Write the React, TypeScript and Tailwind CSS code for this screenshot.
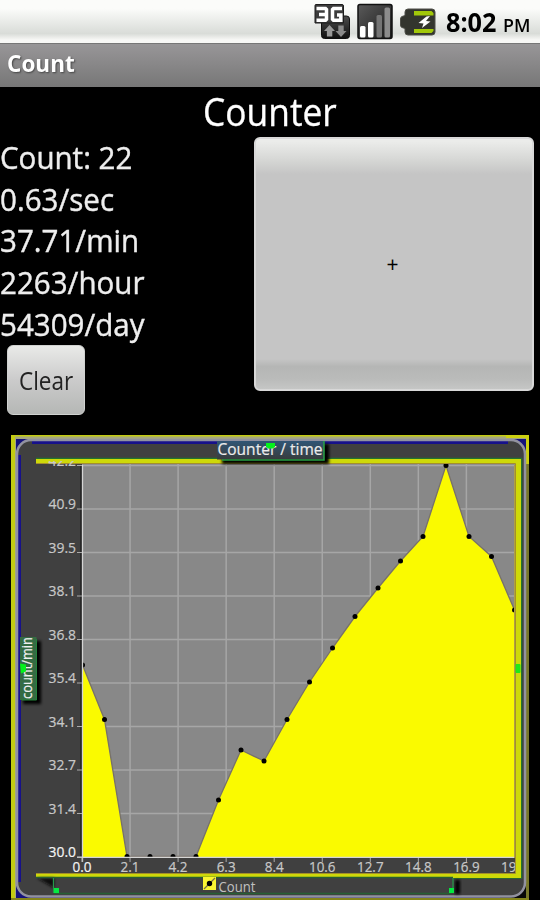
import { ReactNode } from "react";

interface CondensedProps {
  children: ReactNode;
  className?: string;
}

interface Point {
  x: number;
  y: number;
}

const rates = ["Count: 22", "0.63/sec", "37.71/min", "2263/hour", "54309/day"];

const yLabels = ["42.2", "40.9", "39.5", "38.1", "36.8", "35.4", "34.1", "32.7", "31.4", "30.0"];
const xLabels = ["0.0", "2.1", "4.2", "6.3", "8.4", "10.6", "12.7", "14.8", "16.9"];

const points: Point[] = [
  { x: 82.5, y: 665 },
  { x: 104.5, y: 719.5 },
  { x: 127, y: 856.5 },
  { x: 150, y: 856.5 },
  { x: 173, y: 856.5 },
  { x: 196, y: 856.5 },
  { x: 218.5, y: 800 },
  { x: 241, y: 750 },
  { x: 264, y: 761 },
  { x: 287, y: 719.5 },
  { x: 309.5, y: 682 },
  { x: 332.5, y: 648 },
  { x: 355, y: 616.5 },
  { x: 378, y: 588 },
  { x: 400.5, y: 561 },
  { x: 423, y: 536.5 },
  { x: 446, y: 465.5 },
  { x: 469, y: 536.5 },
  { x: 491.5, y: 556.5 },
  { x: 514.5, y: 610 },
];

const line = points.map((point) => `${point.x},${point.y}`).join(" ");

function Condensed({ children, className = "" }: CondensedProps) {
  return <span className={`block whitespace-nowrap ${className}`}>{children}</span>;
}

function NetworkIcon() {
  return (
    <svg width="37" height="37" viewBox="0 0 37 37">
      <defs>
        <linearGradient id="dark" x1="0" y1="0" x2="0" y2="1">
          <stop offset="0" stopColor="#4c4c4c" />
          <stop offset="1" stopColor="#101010" />
        </linearGradient>
      </defs>
      <rect x="7.5" y="13" width="28" height="22.5" rx="3" fill="url(#dark)" stroke="#111" />
      <path d="M2 1.500H28a1.500 1.500 0 0 1 1.500 1.500v17H1V2.500a1 1 0 0 1 1-1z" fill="#3c3c3c" stroke="#1c1c1c" />
      <path
        d="M2.500 5.500h9l1 1v9.700l-1 1h-9M5 11.400h7M28 5.500h-8.500l-1 1v9.700l1 1h7.300V11.900h-3.800"
        fill="none"
        stroke="#fff"
        strokeWidth="3.500"
      />
      <path d="M15.500 22l5.500 6h-2.700V33.500h-5.400v-5.500H10z" fill="#999" />
      <path d="M27 34l-5.500-6h2.800V22.500h5.400V28h2.800z" fill="#8a8a8a" />
    </svg>
  );
}

function SignalIcon() {
  return (
    <svg width="37" height="37" viewBox="0 0 37 37">
      <defs>
        <linearGradient id="signal" x1="0" y1="0" x2="1" y2="1">
          <stop offset="0" stopColor="#5a5a5a" />
          <stop offset="1" stopColor="#1a1a1a" />
        </linearGradient>
      </defs>
      <rect x="1" y="1.500" width="34" height="34" rx="2" fill="url(#signal)" stroke="#111" strokeWidth="1.500" />
      <rect x="3" y="23" width="5.500" height="11.500" rx="1.500" fill="#fff" />
      <rect x="11" y="19" width="5.500" height="15.500" rx="1.500" fill="#fff" />
      <rect x="19.500" y="12" width="5.500" height="22.500" rx="1.500" fill="#757575" />
      <rect x="27.500" y="4.500" width="5.500" height="30" rx="1.500" fill="#8c8c8c" />
    </svg>
  );
}

function BatteryIcon() {
  return (
    <svg width="36" height="28" viewBox="0 0 36 28">
      <path
        d="M8 1h24q3 0 3 3v20q0 3-3 3H8q-3 0-3-3v-3.500l-3-1Q.5 19 .5 17v-6Q.5 9 2 8.500l3-1V4q0-3 3-3z"
        fill="#33352e"
        stroke="#4e4f48"
      />
      <path d="M14 3h17.500l2 2v2.500H14zM14 21h19.500v2l-2 2H14z" fill="#a2c80a" />
      <path d="M26.500 8.500l-8 6.500 5 .5-1.500 4.500 8.500-6.500-4.500-.5L30 8z" fill="#fff" />
    </svg>
  );
}

function StatusBar() {
  return (
    <header className="flex h-[43px] items-start justify-end bg-linear-to-b from-[#fbfcfa] from-20% via-[#d9dcd8] via-78% to-[#f8f8f6] to-93% pr-[10px]">
      <div className="flex items-start gap-[6px] pt-[3px]">
        <NetworkIcon />
        <SignalIcon />
        <div className="pt-[5px]">
          <BatteryIcon />
        </div>
      </div>
      <div className="ml-[10px] flex h-[43px] w-[84px] items-baseline justify-between text-black">
        <Condensed className="w-[51px] origin-left scale-x-[0.97] text-[26px] leading-[44px] font-bold">8:02</Condensed>
        <Condensed className="w-[27px] origin-left scale-x-[1.02] text-[17.5px] font-semibold">PM</Condensed>
      </div>
    </header>
  );
}

function RateChart() {
  return (
    <svg className="block" width="540" height="470" viewBox="0 430 540 470">
      <defs>
        <filter id="shadow" x="-20%" y="-50%" width="150%" height="250%">
          <feGaussianBlur stdDeviation="1.500" />
        </filter>
        <linearGradient id="title" x1="0" y1="0" x2="0" y2="1">
          <stop offset="0" stopColor="#305575" />
          <stop offset="1" stopColor="#383c3c" />
        </linearGradient>
        <clipPath id="grid">
          <rect x="82" y="464" width="433" height="393.500" />
        </clipPath>
        <clipPath id="labels">
          <rect x="36" y="461" width="479" height="415" />
        </clipPath>
      </defs>

      {/* frame */}
      <rect x="11" y="435" width="518" height="465" fill="#c3cb12" />
      <rect x="15" y="436.500" width="512" height="464" fill="#a5a780" />
      <path d="M526 464h3v436h-3z" fill="#77772a" />
      <path d="M506 435h23v29h-3v-26h-20z" fill="#ccd010" />
      <rect x="16" y="439" width="510" height="459" fill="#15127b" />
      <path d="M500 870h26v28h-26z" fill="#080808" />
      <rect x="11" y="898" width="518" height="2" fill="#85851b" />
      <rect x="17" y="440" width="508" height="456.500" rx="14" fill="#404040" />
      <path d="M19.500 455v427M32 442.500h476" stroke="#17118b" strokeWidth="3" />
      <rect x="17" y="440" width="508" height="456.500" rx="14" fill="none" stroke="#9292a0" strokeWidth="2.500" />

      {/* plot border */}
      <path d="M36 458.500h485.500v419.500H454" fill="none" stroke="#24742c" strokeWidth="1.500" />
      <path d="M36 461.500h482.500v414H36" fill="none" stroke="#ced909" strokeWidth="5" />
      <path d="M36 463.500h479.500v410H36" fill="none" stroke="#a48f2b" strokeWidth="1" />
      <rect x="82" y="464" width="433" height="393" fill="#888" />

      <g clipPath="url(#grid)">
        {xLabels.map((label, index) => (
          <path key={label} d={`M${82 + index * 48.05} 464v393`} stroke="#a6a6a6" strokeWidth="1.500" />
        ))}
        {yLabels.map((label, index) => (
          <path key={label} d={`M82 ${465.5 + index * 43.5}h433`} stroke="#a6a6a6" strokeWidth="1.500" />
        ))}
        <polygon points={`82,857 ${line} 515,857`} fill="#fafa00" />
        <polyline points={line} fill="none" stroke="#77716a" strokeWidth="1.300" />
        {points.map((point) => (
          <circle key={point.x} cx={point.x} cy={point.y} r="2.500" fill="#000" />
        ))}
      </g>

      <path d="M81 465v393" stroke="#101010" strokeWidth="1" />
      <path d="M82.500 465v397M77 857.300h438" fill="none" stroke="#d5d5d5" strokeWidth="1.300" />
      <path d="M514.500 465v393" stroke="#ad9f48" strokeWidth="1" />

      <g clipPath="url(#labels)" fontSize="14.5" strokeWidth="0.200">
        {yLabels.map((label, index) => (
          <g key={label}>
            <path d={`M77 ${465.5 + index * 43.5}h5`} stroke="#aaa" strokeWidth="1" />
            <text
              x="48.500"
              y={465.500 + index * 43.500}
              textLength="27.500"
              lengthAdjust="spacingAndGlyphs"
              fill={index === 9 ? "#f4f4f4" : "#c8c8c8"}
              stroke={index === 9 ? "#f4f4f4" : "#c8c8c8"}
            >
              {label}
            </text>
          </g>
        ))}
        {xLabels.map((label, index) => (
          <g key={label}>
            <path d={`M${82 + index * 48.05} 858v4`} stroke="#aaa" strokeWidth="1" />
            <text
              x={82 + index * 48.05}
              y="872"
              textAnchor="middle"
              textLength={label.length === 3 ? 19 : 26.5}
              lengthAdjust="spacingAndGlyphs"
              fill={index === 0 ? "#f4f4f4" : "#c8c8c8"}
              stroke={index === 0 ? "#f4f4f4" : "#c8c8c8"}
            >
              {label}
            </text>
          </g>
        ))}
        <text x="501" y="872" textLength="26.500" lengthAdjust="spacingAndGlyphs" fill="#c8c8c8" stroke="#c8c8c8">
          19.0
        </text>
      </g>

      {/* chart title */}
      <rect x="222" y="444" width="107" height="20" fill="#000" filter="url(#shadow)" />
      <rect x="217" y="441" width="107" height="18.500" fill="url(#title)" />
      <path d="M222 460h102v-19" fill="none" stroke="#27a344" strokeWidth="1.500" />
      <text
        x="217.500"
        y="455"
        fontSize="16"
        textLength="105"
        lengthAdjust="spacingAndGlyphs"
        fill="#ececec"
        stroke="#ececec"
        strokeWidth="0.200"
      >
        Counter / time
      </text>
      <path d="M266 443h9v3.500l-2 2h-5l-2-2z" fill="#04f11c" />

      {/* axis title */}
      <rect x="23" y="641" width="18" height="63" fill="#000" filter="url(#shadow)" />
      <rect x="20" y="637" width="16.500" height="63" fill="#346b43" />
      <path d="M36.500 639v61H22" fill="none" stroke="#24833b" strokeWidth="1" />
      <text
        x="-699"
        y="31.500"
        transform="rotate(-90)"
        fontSize="14.5"
        textLength="62"
        lengthAdjust="spacingAndGlyphs"
        fill="#f0f0f0"
        stroke="#f0f0f0"
        strokeWidth="0.200"
      >
        count/min
      </text>
      <path d="M20 663.500l6 1v7l-5 2z" fill="#04f11c" />
      <rect x="515.500" y="664" width="5" height="9" rx="1" fill="#20e818" />

      {/* legend */}
      <path d="M37 878h17v10z" fill="#111" filter="url(#shadow)" />
      <rect x="455" y="880" width="5" height="14" fill="#050505" filter="url(#shadow)" />
      <path d="M36 877.500h417M54 893.500h397" stroke="#275f34" strokeWidth="1.300" />
      <path d="M53.500 878v15M453 878v15" stroke="#25994a" strokeWidth="1.200" />
      <rect x="54" y="888" width="5" height="5" fill="#05e941" />
      <rect x="449" y="888" width="5" height="5" fill="#05e941" />
      <rect x="203" y="877" width="13" height="13" fill="#faf532" />
      <path d="M204 889l11-11" stroke="#77714a" strokeWidth="1.300" />
      <circle cx="209.500" cy="883.500" r="2.700" fill="#000" />
      <text x="218.500" y="891.500" fontSize="14" textLength="37" lengthAdjust="spacingAndGlyphs" fill="#c0c0c0">
        Count
      </text>
    </svg>
  );
}

export default function App() {
  return (
    <div className="h-[900px] w-[540px] overflow-hidden bg-black font-['Open_Sans','Noto_Sans',sans-serif] text-[#eee]">
      <StatusBar />
      <div className="flex h-11 items-center border-t border-[#777] bg-linear-to-b from-[#989698] to-[#777] pb-[3px] pl-[7px]">
        <Condensed className="origin-left scale-x-[0.96] text-[23.5px] font-bold text-white [text-shadow:1px_1px_2px_#444]">Count</Condensed>
      </div>

      <main>
        <h1 className="flex h-[50px] items-center justify-center pb-[3px]">
          <Condensed className="scale-x-[0.93] text-[38px] leading-[50px] text-white [-webkit-text-stroke:0.3px_#fff]">Counter</Condensed>
        </h1>
        <div className="flex h-[293px] justify-between pr-[6px]">
          <div className="w-[180px]">
            {rates.map((rate) => (
              <div key={rate} className="h-[41.7px]">
                <Condensed className="origin-left scale-x-[0.953] text-[31px] leading-[40px] [-webkit-text-stroke:0.4px_#eee]">{rate}</Condensed>
              </div>
            ))}
            <button className="ml-[7px] flex h-[70px] w-[78px] items-center justify-center rounded-[6px] border border-[#d0d2d0] bg-linear-to-b from-[#e9eae8] via-[#cbcbcb] via-50% to-[#b5b7b5] text-[#222]">
              <Condensed className="scale-x-[0.9] text-[25px]">Clear</Condensed>
            </button>
          </div>
          <button className="flex h-[254px] w-[280px] items-center justify-center rounded-[6px] border-2 border-[#d8d8d8] bg-[linear-gradient(to_bottom,#ebecea_1%,#d4d5d3_9%,#c5c5c5_14%,#c5c5c5_88%,#b5b6b5_91%,#babbba_96%,#c5c6c5_100%)] pt-[2px] pr-[3px] text-black">
            <Condensed className="text-[21px]">+</Condensed>
          </button>
        </div>
        <RateChart />
      </main>
    </div>
  );
}
